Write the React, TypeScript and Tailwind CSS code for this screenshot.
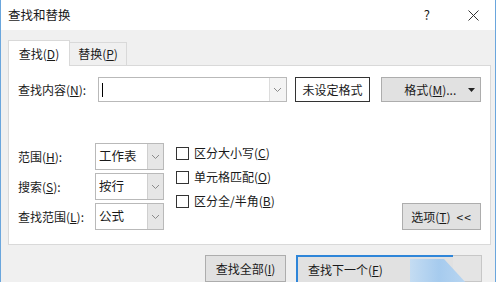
const FONT = { fontFamily: '"Microsoft YaHei", "Noto Sans CJK SC", "Noto Sans", sans-serif' }

function Chevron() {
  return (
    <svg width="9" height="6" viewBox="0 0 9 6" className="text-[#8a8a8a]">
      <path d="M1 1l3.5 3.5L8 1" fill="none" stroke="currentColor" strokeWidth="1" />
    </svg>
  )
}

function Select({ value }: { value: string }) {
  return (
    <div className="flex h-[27px] w-[69px] border border-[#b9b9b9] bg-white">
      <div className="flex flex-1 items-center pl-[3px] text-[12.5px] text-[#1a1a1a]">{value}</div>
      <div className="flex w-[16px] items-center justify-center border-l border-[#cfcfcf] bg-[#e6e6e6]">
        <Chevron />
      </div>
    </div>
  )
}

function Check({ label, hot, tail }: { label: string; hot: string; tail?: string }) {
  return (
    <div className="flex h-[24px] items-center gap-[5px] text-[12px] text-[#1a1a1a]">
      <span className="h-[13px] w-[13px] border border-[#333] bg-white" />
      <span>
        {label}(<u>{hot}</u>){tail}
      </span>
    </div>
  )
}

export default function App() {
  return (
    <div className="h-[282px] w-[500px] overflow-hidden bg-white" style={FONT}>
      <div className="flex h-full w-[496px] flex-col border-x border-[#6aa6dd]">
        <div className="flex h-[30px] shrink-0 items-center bg-white pl-[7px] pr-[16px] text-[12.5px] text-[#1a1a1a]">
          <span className="flex-1">查找和替换</span>
          <span className="mr-[38px] text-[13px]">?</span>
          <svg width="11" height="11" viewBox="0 0 11 11">
            <path d="M0.5 0.5l10 10M10.5 0.5l-10 10" stroke="#333" strokeWidth="1" />
          </svg>
        </div>

        <div className="relative flex-1 bg-[#f0f0f0] pl-[7px] pt-[10px]">
          <div className="flex h-[25px] items-end">
            <div className="relative z-10 -mb-px flex h-[26px] w-[62px] items-center justify-center border border-b-0 border-[#d9d9d9] bg-white text-[12px] text-[#1a1a1a]">
              查找(<u>D</u>)
            </div>
            <div className="flex h-[23px] w-[57px] items-center justify-center border border-b-0 border-l-0 border-[#d9d9d9] bg-[#f0f0f0] text-[12px] text-[#1a1a1a]">
              替换(<u>P</u>)
            </div>
          </div>

          <div className="h-[180px] w-[483px] border border-[#d9d9d9] bg-white pl-[9px] pr-[9px] pt-[11px] text-[12px] text-[#1a1a1a]">
            <div className="flex items-center">
              <span className="w-[80px]">查找内容(<u>N</u>):</span>
              <div className="flex h-[25px] w-[190px] border border-[#b9b9b9]">
                <div className="flex flex-1 items-center pl-[3px]">
                  <span className="h-[14px] w-px bg-black" />
                </div>
                <div className="flex w-[17px] items-center justify-center border-l border-[#dcdcdc] bg-[#f4f4f4]">
                  <Chevron />
                </div>
              </div>
              <div className="ml-[8px] flex h-[25px] w-[76px] items-center justify-center border border-[#333]">未设定格式</div>
              <div className="ml-[11px] flex h-[25px] w-[100px] items-center border border-[#adadad] bg-[#e1e1e1] pl-[22px] pr-[5px]">
                <span className="flex-1">
                  格式(<u>M</u>)...
                </span>
                <svg width="7" height="4" viewBox="0 0 7 4">
                  <path d="M0 0h7L3.5 4z" fill="#222" />
                </svg>
              </div>
            </div>

            <div className="mt-[41px] flex">
              <div className="flex w-[158px] flex-col gap-[3px]">
                <div className="flex items-center">
                  <span className="w-[77px]">范围(<u>H</u>):</span>
                  <Select value="工作表" />
                </div>
                <div className="flex items-center">
                  <span className="w-[77px]">搜索(<u>S</u>):</span>
                  <Select value="按行" />
                </div>
                <div className="flex items-center">
                  <span className="w-[77px]">查找范围(<u>L</u>):</span>
                  <Select value="公式" />
                </div>
              </div>
              <div className="-mt-[2px] flex flex-col">
                <Check label="区分大小写" hot="C" />
                <Check label="单元格匹配" hot="O" />
                <Check label="区分全/半角" hot="B" />
              </div>
              <div className="flex flex-1 items-end justify-end">
                <div className="flex h-[27px] w-[79px] items-center justify-center gap-[6px] border border-[#adadad] bg-[#e1e1e1]">
                  <span>
                    选项(<u>T</u>)
                  </span>
                  <span className="tracking-[1px]">&lt;&lt;</span>
                </div>
              </div>
            </div>
          </div>

          <div className="mt-[10px] flex pl-[197px] text-[12px] text-[#1a1a1a]">
            <div className="flex h-[27px] w-[81px] items-center justify-center border border-[#adadad] bg-[#e1e1e1]">
              查找全部(<u>I</u>)
            </div>
            <div className="relative ml-[10px] flex h-[27px] w-[157px] items-center border-l-2 border-t-2 border-[#2f86d9] bg-[#e1e1e1] pl-[10px]">
              <span>
                查找下一个(<u>F</u>)
              </span>
              <svg className="absolute left-[112px] top-[2px]" width="62" height="26" viewBox="0 0 62 26">
                <defs>
                  <linearGradient id="wm" x1="0" x2="1" y1="0" y2="0">
                    <stop offset="0" stopColor="#c4dcf2" />
                    <stop offset="0.5" stopColor="#a6cbee" />
                    <stop offset="1" stopColor="#b9d6f1" />
                  </linearGradient>
                </defs>
                <path d="M0 0h34l24 26H0z" fill="url(#wm)" />
              </svg>
            </div>
            <div className="h-[27px] w-[29px] border border-l-0 border-[#c7c7c7] bg-[#e4e4e4]" />
          </div>
        </div>
      </div>
    </div>
  )
}
